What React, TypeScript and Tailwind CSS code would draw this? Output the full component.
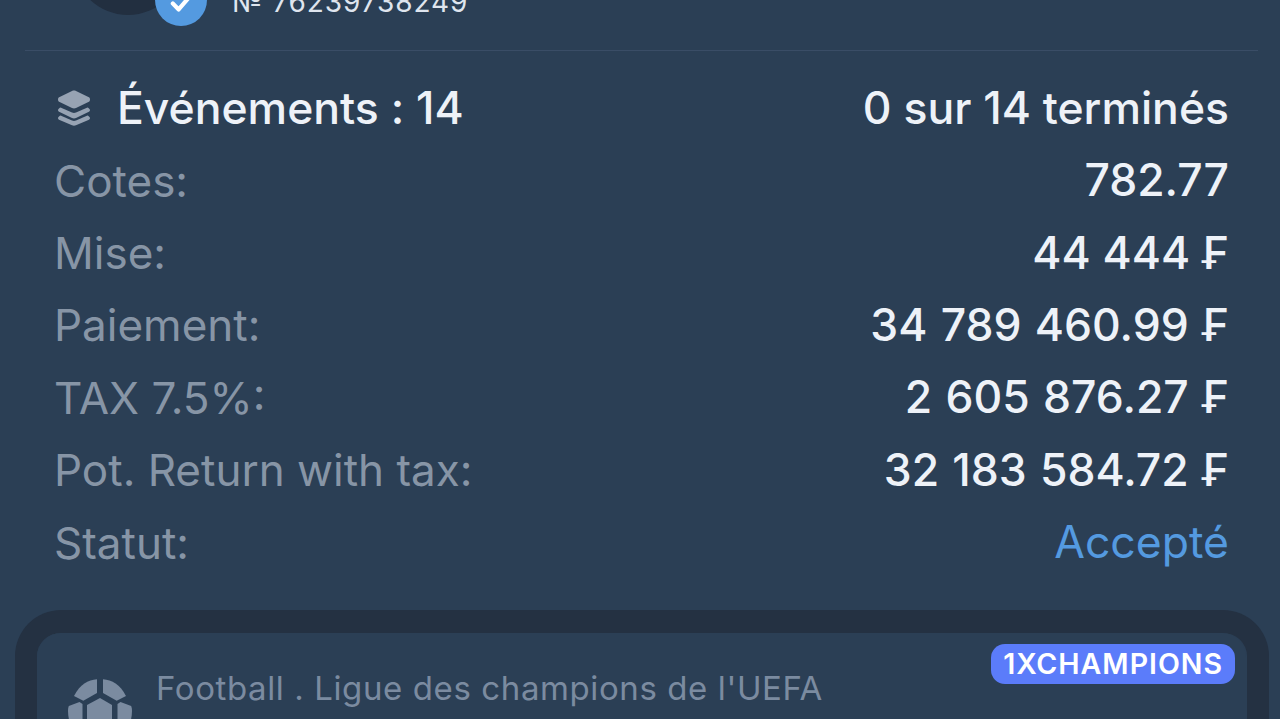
import { ReactNode } from "react";

const rows: { label: string; value: ReactNode; accent?: boolean; spaced?: boolean }[] = [
  { label: "Cotes:", value: "782.77" },
  { label: "Mise:", value: "44 444 ₣" },
  { label: "Paiement:", value: "34 789 460.99 ₣", spaced: true },
  { label: "TAX 7.5%:", value: "2 605 876.27 ₣", spaced: true },
  { label: "Pot. Return with tax:", value: "32 183 584.72 ₣", spaced: true },
  { label: "Statut:", value: "Accepté", accent: true },
];

function StackIcon() {
  return (
    <svg viewBox="0 0 34 36" className="w-[34px] h-[36px] shrink-0" fill="#97a3b3">
      <path d="M15 22.500 3.500 17.500c-.6.300-2.500 1.400-2.500 2.600 0 1 .8 1.600 1.600 2L15 28c1.300.6 2.700.6 4 0l12.400-5.900c.8-.4 1.600-1 1.600-2 0-1.200-1.900-2.300-2.500-2.600L19 22.500c-1.300.6-2.700.6-4 0Z" />
      <path d="M15 30.500 3.500 25.500c-.6.300-2.500 1.400-2.500 2.600 0 1 .8 1.600 1.600 2L15 35.300c1.300.6 2.700.6 4 0l12.400-5.200c.8-.4 1.600-1 1.600-2 0-1.200-1.900-2.300-2.500-2.600L19 30.500c-1.300.6-2.700.6-4 0Z" />
      <path d="M15 1 2.600 6.900C1.800 7.300 1 7.900 1 9.500s.8 2.200 1.600 2.600L15 18c1.300.6 2.700.6 4 0l12.400-5.900c.8-.4 1.600-1 1.600-2.600s-.8-2.200-1.600-2.600L19 1c-1.300-.6-2.700-.6-4 0Z" />
    </svg>
  );
}

function BallIcon() {
  return (
    <svg viewBox="0 0 64 64" className="w-16 h-16 shrink-0" fill="#7b8ba0">
      <path d="M29 .3C20 1 12 5.500 6 17l9.300 4.700L29 14Z" />
      <path d="M35 .3C44 1 52 5.500 58 17l-9.300 4.700L35 14Z" />
      <path d="M32 19l12 7v16l-12 8-13-8V26Z" />
      <path d="M11.500 23l3 2v20L6 52C2 46 0 39 0 32c0-2 .3-3.500 .8-5Z" />
      <path d="M52.500 23l-3 2v20l8.500 7c4-6 6-13 6-20 0-2-.3-3.500-.8-5Z" />
    </svg>
  );
}

export default function App() {
  return (
    <div className="w-[1280px] h-[719px] overflow-hidden bg-[#2b3f55] font-['Inter',sans-serif] text-[#eef2f8]">
      {/* header, scrolled off the top */}
      <div className="relative flex items-start mx-[22px] pl-[3px] h-[51px]">
        <div className="absolute left-[51px] -top-[95px] w-[110px] h-[110px] rounded-full bg-[#222f40]" />
        <div className="absolute left-[133px] -top-[26px] w-[52px] h-[52px] rounded-full bg-[#549ae0] flex items-center justify-center">
          <svg viewBox="0 0 24 24" className="w-[28px] h-[28px] mt-[6px]" fill="none" stroke="#fff" strokeWidth="3.600" strokeLinecap="round" strokeLinejoin="round">
            <path d="M5 12.500 10 17.500 19 7" />
          </svg>
        </div>
        <p className="pl-[207px] -mt-[14px] text-[28px] leading-[32px] text-[#dfe5ee] tracking-[0.9px]">№ 76239738249</p>
        <div className="absolute left-[3px] right-0 bottom-0 h-px bg-[#3a4d66]" />
      </div>

      <div className="flex flex-col pl-[52px] pr-[51px] mt-[21px]">
        <div className="flex items-center justify-between h-[72.400px]">
          <div className="flex items-center gap-[26px] pl-[5px]">
            <StackIcon />
            <span className="text-[44.500px] font-medium [font-feature-settings:'calt'_0]">Événements : 14</span>
          </div>
          <span className="text-[44.500px] font-medium">0 sur 14 terminés</span>
        </div>
        {rows.map((row) => (
          <div key={row.label} className="flex items-center justify-between h-[72.400px]">
            <span className="text-[44px] pl-[2px] text-[#8795a6]">{row.label}</span>
            <span className={`text-[44.500px] ${row.accent ? "text-[#549ae0]" : "font-medium"} ${row.spaced ? "[word-spacing:1.400px]" : ""}`}>{row.value}</span>
          </div>
        ))}
      </div>

      <div className="ml-[15px] mr-[11px] mt-[31px] rounded-t-[46px] border-x-[22px] border-t-[23px] border-[#243142]">
        <div className="relative rounded-t-[24px] bg-[#2b3f55] h-[200px] flex gap-[24px] pl-[31px] pt-[35px] mr-[1px]">
          <div className="mt-[11px]">
            <BallIcon />
          </div>
          <p className="text-[33px] leading-[40px] text-[#7b8ba0] tracking-[0.6px]">Football . Ligue des champions de l'UEFA</p>
          <span className="absolute right-[11px] top-[11px] h-[40px] px-[12px] rounded-[14px] bg-[#5b7cfa] text-[28.500px] leading-[40px] font-semibold text-white tracking-[1px]">1XCHAMPIONS</span>
        </div>
      </div>
    </div>
  );
}
